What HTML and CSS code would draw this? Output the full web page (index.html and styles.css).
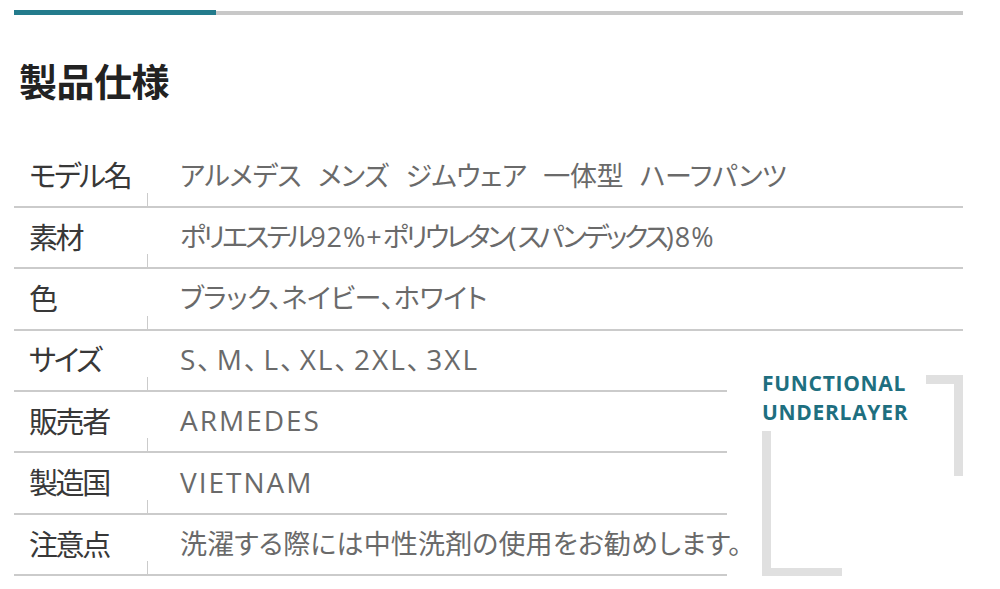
FILE: index.html
```html
<!DOCTYPE html>
<html lang="ja">
<head>
<meta charset="utf-8">
<title>製品仕様</title>
<link rel="stylesheet" href="styles.css">
</head>
<body>
<div class="page">
  <div class="topbar"><span class="topbar-accent"></span></div>
  <h1 class="title">製品仕様</h1>
  <div class="specs">
    <div class="row"><div class="label">モデル名</div><div class="value value--model">アルメデス メンズ ジムウェア 一体型 ハーフパンツ</div></div>
    <div class="row"><div class="label">素材</div><div class="value value--prop">ポリエステル<span class="lat">92%+</span>ポリウレタン<span class="lat">(</span>スパンデックス<span class="lat">)8%</span></div></div>
    <div class="row"><div class="label">色</div><div class="value value--colors">ブラック、ネイビー、ホワイト</div></div>
    <div class="lower">
      <div class="rows-narrow">
        <div class="row"><div class="label">サイズ</div><div class="value value--sizes"><span class="lat">S</span>、<span class="lat">M</span>、<span class="lat">L</span>、<span class="lat">XL</span>、<span class="lat">2XL</span>、<span class="lat">3XL</span></div></div>
        <div class="row"><div class="label">販売者</div><div class="value"><span class="lat">ARMEDES</span></div></div>
        <div class="row"><div class="label">製造国</div><div class="value"><span class="lat">VIETNAM</span></div></div>
        <div class="row"><div class="label">注意点</div><div class="value value--note">洗濯する際には中性洗剤の使用をお勧めします。</div></div>
      </div>
      <div class="badge">
        <div class="badge-text">FUNCTIONAL<br>UNDERLAYER</div>
        <div class="bracket bracket-tr"></div>
        <div class="bracket bracket-bl"></div>
      </div>
    </div>
  </div>
</div>
</body>
</html>
```

FILE: styles.css
```css
html, body {
  margin: 0;
  padding: 0;
  background: #ffffff;
}
body {
  font-family: "Noto Sans CJK JP", "Noto Sans", sans-serif;
}
.page {
  width: 949px;
  padding: 11px 0 0 14px;
}
.topbar {
  height: 4px;
  background: #c8c8c8;
  display: flex;
}
.topbar-accent {
  width: 202px;
  height: 5px;
  margin-top: -1px;
  background: #237b8c;
}
.title {
  margin: 39px 0 0 5px;
  font-size: 38px;
  line-height: 52px;
  font-weight: 700;
  color: #222222;
  letter-spacing: -0.5px;
}
.specs {
  margin-top: 40.5px;
  display: flex;
  flex-direction: column;
}
.row {
  box-sizing: border-box;
  height: 61.4px;
  border-bottom: 2px solid #cbcbcb;
  display: flex;
  align-items: center;
  font-feature-settings: "palt";
}
.label {
  box-sizing: border-box;
  flex: 0 0 134px;
  height: 100%;
  padding: 0 0 4px 15px;
  display: flex;
  align-items: center;
  font-size: 29px;
  letter-spacing: -2.4px;
  color: #383838;
  background: linear-gradient(#cbcbcb, #cbcbcb) right bottom / 1.5px 13px no-repeat;
}
.value {
  padding: 0 0 4px 32px;
  font-size: 27px;
  color: #6a6a6a;
  white-space: nowrap;
}
.value--model {
  letter-spacing: -0.4px;
  word-spacing: 11px;
}
.value--prop {
  letter-spacing: -3px;
}
.value--colors {
  letter-spacing: -0.4px;
}
.value--sizes {
  letter-spacing: 6px;
}
.value--note {
  letter-spacing: 0.15px;
}
.lat {
  font-family: "Open Sans", "Liberation Sans", sans-serif;
  font-size: 28px;
  letter-spacing: 2px;
}
.value--prop .lat {
  font-size: 27px;
  letter-spacing: 1px;
}
.lower {
  display: flex;
  align-items: flex-end;
}
.rows-narrow {
  width: 713px;
  flex: 0 0 713px;
  display: flex;
  flex-direction: column;
}
.badge {
  margin-left: 35px;
  flex: 1;
  display: grid;
  grid-template-columns: 1fr 37px;
  grid-template-rows: auto auto;
  margin-bottom: -1px;
}
.badge-text {
  grid-column: 1;
  grid-row: 1;
  margin-top: -2px;
  font-family: "Open Sans", "Liberation Sans", sans-serif;
  font-weight: 700;
  font-size: 21px;
  line-height: 29px;
  color: #1e6f80;
  letter-spacing: 0.7px;
}
.bracket {
  box-sizing: border-box;
  border: 0 solid #e0e0e0;
}
.bracket-tr {
  grid-column: 2;
  grid-row: 1 / span 2;
  align-self: start;
  margin-top: 4px;
  height: 101px;
  border-top-width: 9px;
  border-right-width: 9px;
}
.bracket-bl {
  grid-column: 1;
  grid-row: 2;
  margin-top: 4px;
  width: 80px;
  height: 146px;
  border-left-width: 9px;
  border-bottom-width: 9px;
}
```
